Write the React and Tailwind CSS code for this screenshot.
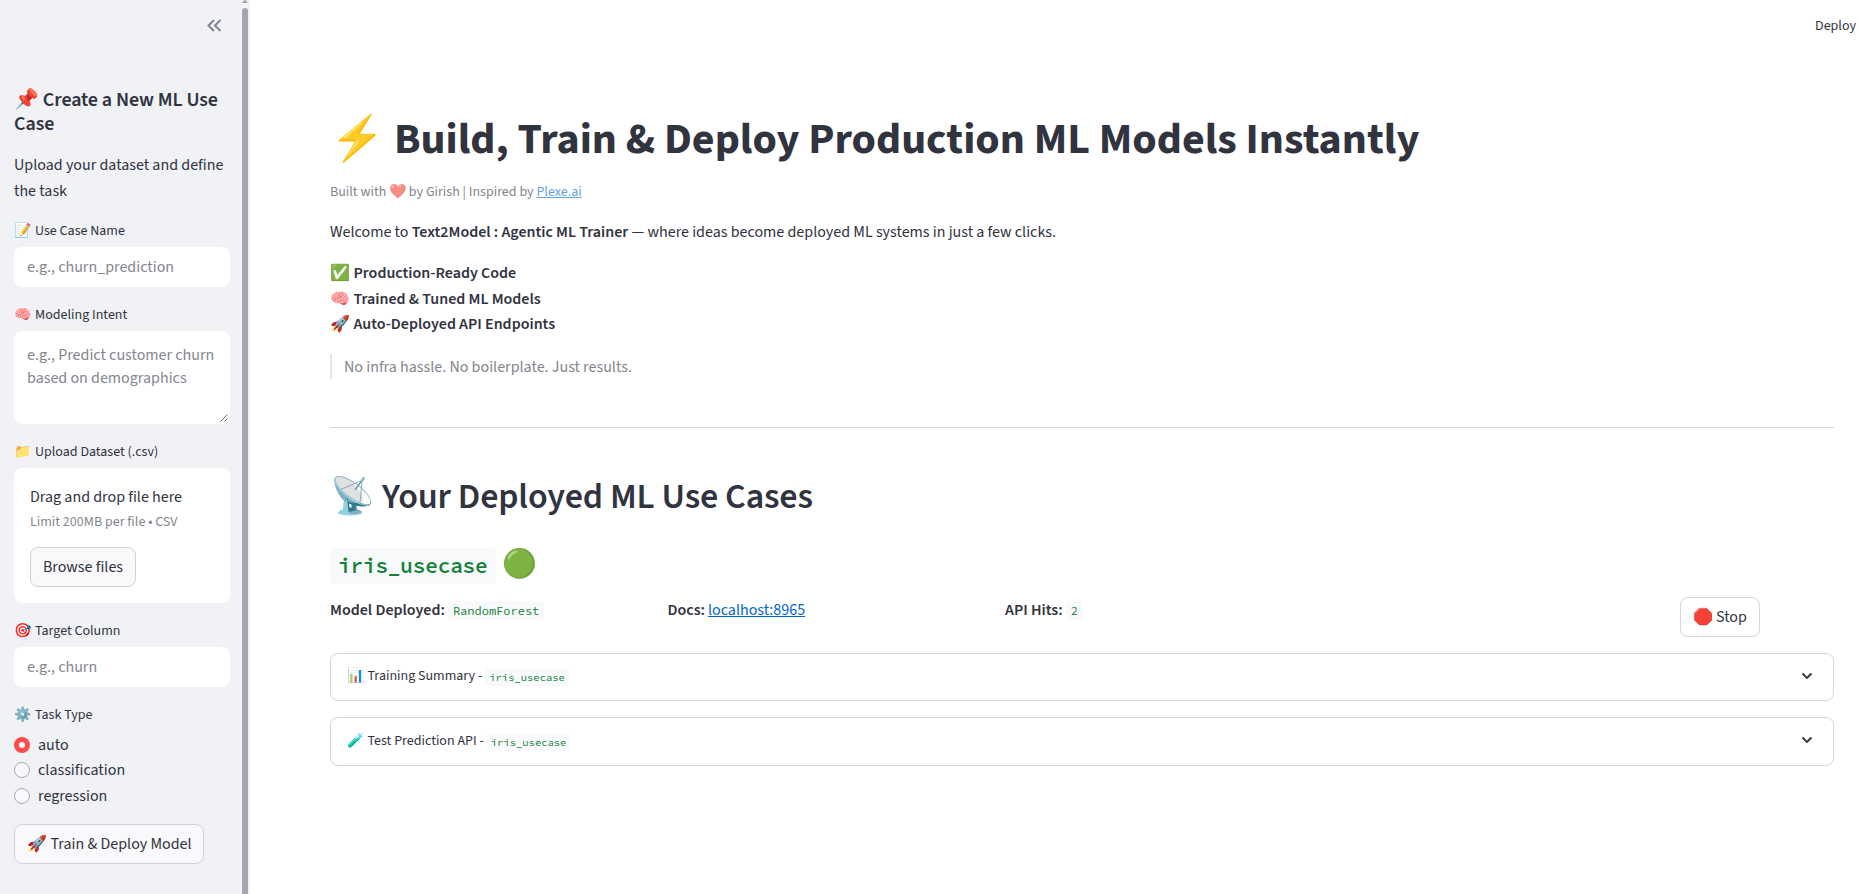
import React from "react";

const sans = "font-['Source_Sans_Pro','Source_Sans_3','Noto_Sans_CJK_SC','Open_Sans',sans-serif]";
const mono = "font-['Source_Code_Pro','Noto_Sans_Mono_CJK_SC','DejaVu_Sans_Mono',monospace]";

function Label({ icon, children, className = "" }) {
  return (
    <div className={`flex h-[23px] items-center gap-1 whitespace-nowrap text-[14px] leading-[22px] ${className}`}>
      <span className="w-[17px]">{icon}</span>
      <span>{children}</span>
    </div>
  );
}

function Radio({ label, checked }) {
  return (
    <label className="flex h-[25.6px] items-center gap-2">
      <span
        className={
          checked
            ? "flex size-4 items-center justify-center rounded-full bg-[#ff4b4b]"
            : "size-4 rounded-full border border-[#a9abb2] bg-[#f9f9fb]"
        }
      >
        {checked && <span className="size-1.5 rounded-full bg-white" />}
      </span>
      <span className="leading-6">{label}</span>
    </label>
  );
}

function Feature({ icon, children }) {
  return (
    <li className="flex h-[25.6px] items-center gap-1">
      <span className="w-[19.5px] leading-6">{icon}</span>
      <span className="font-semibold leading-6">{children}</span>
    </li>
  );
}

function Code({ children, className = "" }) {
  return (
    <code className={`${mono} inline-flex items-center rounded bg-[#f8f9fb] text-[#158237] ${className}`}>{children}</code>
  );
}

function Expander({ icon, title, className = "" }) {
  return (
    <div className={`flex items-center rounded-lg border border-[#d6d6d9] pl-4 pr-[18px] text-[14px] ${className}`}>
      <span className="w-[17px]">{icon}</span>
      <span className="ml-[3.5px]">{title} -</span>
      <Code className="ml-[3px] mt-0.5 h-[17px] px-1 text-[10.5px]">iris_usecase</Code>
      <svg className="mb-0.5 ml-auto size-4" viewBox="0 0 16 16" fill="none" stroke="#31333f" strokeWidth="1.8">
        <path d="M3.5 5.5 8 10l4.500-4.500" />
      </svg>
    </div>
  );
}

function Sidebar() {
  return (
    <aside className="flex w-[250px] shrink-0 bg-[#f0f2f6]">
      <div className="w-[242px] pl-3.5 pr-3">
        <div className="flex h-[88px] justify-end pr-[7px] pt-[17px]">
          <svg className="size-[17px]" viewBox="0 0 17 17" fill="none" stroke="#808495" strokeWidth="2">
            <path d="M8 3 2.500 8.500 8 14M14.500 3 9 8.500l5.500 5.500" />
          </svg>
        </div>
        <h3 className="h-12 whitespace-nowrap text-[20px] font-semibold leading-6 tracking-[-0.005em]">
          📌 Create a New ML Use
          <br />
          Case
        </h3>
        <p className="mt-[17px] h-[51px] whitespace-nowrap leading-[25.6px]">
          Upload your dataset and define
          <br />
          the task
        </p>
        <Label icon="📝" className="mt-[15px]">Use Case Name</Label>
        <div className="mt-[5px] flex h-10 w-[216px] items-center rounded-lg bg-white px-[13px] text-[#84868e]">e.g., churn_prediction</div>
        <Label icon="🧠" className="mt-4">Modeling Intent</Label>
        <div className="relative mt-[5px] h-[93px] w-[216px] whitespace-nowrap rounded-lg bg-white px-[13px] pt-[13px] leading-[23px] text-[#84868e]">
          e.g., Predict customer churn
          <br />
          based on demographics
          <svg className="absolute bottom-[2px] right-0.5 size-2" viewBox="0 0 8 8" stroke="#555" strokeWidth="0.9">
            <path d="M.5 7.500 7.500.5M4.500 7.500l3-3" />
          </svg>
        </div>
        <Label icon="📁" className="mt-4">Upload Dataset (.csv)</Label>
        <div className="mt-[5px] h-[135px] w-[216px] rounded-lg bg-white pl-4 pt-4">
          <div className="h-[26px] leading-[26px]">Drag and drop file here</div>
          <div className="h-[25px] text-[14px] leading-[25px] text-[#84868e]">Limit 200MB per file • CSV</div>
          <button className="mt-3 flex h-10 w-[106px] items-center justify-center rounded-lg border border-[#d1d2d8] bg-[#f9f9fb]">Browse files</button>
        </div>
        <Label icon="🎯" className="mt-4">Target Column</Label>
        <div className="mt-[5px] flex h-10 w-[216px] items-center rounded-lg bg-white px-[13px] text-[#84868e]">e.g., churn</div>
        <Label icon="⚙️" className="mt-4">Task Type</Label>
        <div className="mt-[6px]">
          <Radio label="auto" checked />
          <Radio label="classification" />
          <Radio label="regression" />
        </div>
        <button className="mt-[15px] flex h-10 w-[190px] items-center whitespace-nowrap rounded-lg border border-[#d1d2d8] bg-[#f9f9fb] pl-3">
          <span className="w-[19.5px]">🚀</span>
          <span className="ml-1">Train &amp; Deploy Model</span>
        </button>
      </div>
      <div className="flex w-1.5 flex-col items-center">
        <svg className="h-2 w-1.5 shrink-0" viewBox="0 0 6 8" fill="#a3a3aa">
          <path d="M0 3 2.500 0h1L6 3z" />
        </svg>
        <div className="w-1.5 grow rounded-t-full bg-[#a5a5ad]" />
      </div>
    </aside>
  );
}

export default function App() {
  return (
    <div className={`flex h-[894px] overflow-hidden bg-white text-[16px] text-[#31333f] ${sans}`}>
      <Sidebar />
      <main className="w-[1611px] pl-20">
        <div className="flex h-[102px] justify-end pr-[5px] pt-[15px] text-[14px] leading-[22px]">Deploy</div>
        <h1 className="flex h-[76px] items-center whitespace-nowrap text-[44px] font-bold leading-[76px]">
          <span className="w-[64px]">⚡</span>
          <span>Build, Train &amp; Deploy Production ML Models Instantly</span>
        </h1>
        <p className="mt-[3px] flex h-[22px] items-center whitespace-pre text-[14px] leading-[22px] text-[#84858c]">
          <span>Built with </span>
          <span className="opacity-60">❤️</span>
          <span> by Girish | Inspired by </span>
          <a className="text-[#66a3e0] underline" href="#plexe">Plexe.ai</a>
        </p>
        <p className="mt-[16px] h-[26px] whitespace-nowrap leading-[26px]">
          Welcome to <b className="font-semibold">Text2Model : Agentic ML Trainer</b> — where ideas become deployed ML systems in just a few clicks.
        </p>
        <ul className="mt-[15.4px]">
          <Feature icon="✅">Production-Ready Code</Feature>
          <Feature icon="🧠">Trained &amp; Tuned ML Models</Feature>
          <Feature icon="🚀">Auto-Deployed API Endpoints</Feature>
        </ul>
        <blockquote className="mt-[16.8px] h-[25px] border-l-2 border-[#e6e6ea] pl-3 leading-[26px] text-[#84858c]">
          No infra hassle. No boilerplate. Just results.
        </blockquote>
        <hr className="mt-[48px] w-[1504px] border-[#d6d6d9]" />
        <h2 className="mt-[39px] flex h-[60px] items-center whitespace-nowrap text-[36px] font-semibold leading-[60px] tracking-[-0.005em]">
          <span className="w-[52px]">📡</span>
          <span>Your Deployed ML Use Cases</span>
        </h2>
        <h3 className="mt-[21px] flex h-9 items-center text-[28px] tracking-[-0.005em]">
          <Code className="h-9 w-[166px] px-2 text-[21px] font-semibold">iris_usecase</Code>
          <span className="-mt-1 ml-[6px]">🟢</span>
        </h3>
        <div className="mt-[13px] flex h-10 w-[1504px] gap-4 whitespace-nowrap">
          <div className="flex h-[26px] w-[321.5px] items-center">
            <b className="font-semibold">Model Deployed:</b>
            <Code className="ml-[3px] mt-0.5 h-[19px] px-[5px] text-[12px]">RandomForest</Code>
          </div>
          <div className="flex h-[26px] w-[321.5px] items-center">
            <b className="font-semibold">Docs:</b>
            <a className="ml-[3px] text-[#0068c9] underline" href="#docs">localhost:8965</a>
          </div>
          <div className="flex h-[26px] w-[659px] items-center">
            <b className="font-semibold">API Hits:</b>
            <Code className="ml-[3px] mt-0.5 h-[19px] px-[5px] text-[12px]">2</Code>
          </div>
          <button className="flex h-10 w-20 items-center rounded-lg border border-[#d6d6d9] pl-3">
            <span className="w-[19px]">🛑</span>
            <span className="ml-1">Stop</span>
          </button>
        </div>
        <Expander icon="📊" title="Training Summary" className="mt-4 h-12 w-[1504px]" />
        <Expander icon="🧪" title="Test Prediction API" className="mt-4 h-[49px] w-[1504px]" />
      </main>
    </div>
  );
}
